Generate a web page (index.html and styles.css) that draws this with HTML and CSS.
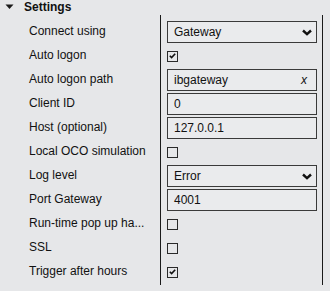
FILE: index.html
```html
<!DOCTYPE html>
<html lang="en">
<head>
    <meta charset="UTF-8">
    <meta name="viewport" content="width=device-width, initial-scale=1.0">
    <title>Settings</title>
    <link rel="stylesheet" href="styles.css">
</head>
<body>

<div class="section">
    <div class="section-head">
        <svg class="caret" width="9" height="6" viewBox="0 0 9 6"><polygon points="0.5,0.5 8.5,0.5 4.5,5" fill="#1a1a1a"/></svg>
        Settings
    </div>

    <div class="grid">
        <div class="names">
            <div class="name">Connect using</div>
            <div class="name">Auto logon</div>
            <div class="name">Auto logon path</div>
            <div class="name">Client ID</div>
            <div class="name">Host (optional)</div>
            <div class="name">Local OCO simulation</div>
            <div class="name">Log level</div>
            <div class="name">Port Gateway</div>
            <div class="name">Run-time pop up ha...</div>
            <div class="name">SSL</div>
            <div class="name">Trigger after hours</div>
        </div>

        <div class="values">
            <div class="value">
                <div class="box select">
                    <span>Gateway</span>
                    <svg class="chevron" width="10" height="7" viewBox="0 0 10 7"><polyline points="1,1.5 5,5.2 9,1.5" fill="none" stroke="#111" stroke-width="2.4"/></svg>
                </div>
            </div>
            <div class="value">
                <div class="check checked"><svg width="7" height="6" viewBox="0 0 7 6"><polyline points="0.8,2.8 2.6,4.6 6.2,0.8" fill="none" stroke="#111" stroke-width="1.6"/></svg></div>
            </div>
            <div class="value">
                <div class="box">
                    <span>ibgateway</span>
                    <span class="clear">x</span>
                </div>
            </div>
            <div class="value"><div class="box"><span>0</span></div></div>
            <div class="value"><div class="box"><span>127.0.0.1</span></div></div>
            <div class="value"><div class="check"></div></div>
            <div class="value">
                <div class="box select">
                    <span>Error</span>
                    <svg class="chevron" width="10" height="7" viewBox="0 0 10 7"><polyline points="1,1.5 5,5.2 9,1.5" fill="none" stroke="#111" stroke-width="2.4"/></svg>
                </div>
            </div>
            <div class="value"><div class="box"><span>4001</span></div></div>
            <div class="value"><div class="check"></div></div>
            <div class="value"><div class="check"></div></div>
            <div class="value">
                <div class="check checked"><svg width="7" height="6" viewBox="0 0 7 6"><polyline points="0.8,2.8 2.6,4.6 6.2,0.8" fill="none" stroke="#111" stroke-width="1.6"/></svg></div>
            </div>
        </div>
    </div>
</div>

</body>
</html>
```

FILE: styles.css
```css
body {
    margin: 0;
    background-color: #e6e7e9;
    font-family: "Liberation Sans", Arial, sans-serif;
    font-size: 12px;
    color: #111;
}
.section-head {
    display: flex;
    align-items: center;
    height: 13px;
    font-weight: bold;
    margin-bottom: 2px;
}
.caret {
    margin-left: 5px;
    margin-right: 10px;
}
.grid {
    display: flex;
}
.names {
    width: 160px;
    padding-top: 5px;
    padding-bottom: 1px;
}
.name {
    height: 24px;
    line-height: 23px;
    padding-left: 29px;
    padding-right: 6px;
    white-space: nowrap;
}
.values {
    width: 161px;
    border-left: 1px solid #1a1a1a;
    border-right: 1px solid #1a1a1a;
    padding-top: 5px;
    padding-bottom: 1px;
}
.value {
    height: 24px;
    display: flex;
    align-items: center;
    padding-left: 6px;
}
.box {
    width: 150px;
    height: 22px;
    box-sizing: border-box;
    border: 1px solid #3a3a3a;
    background-color: #eaebed;
    display: flex;
    align-items: center;
    justify-content: space-between;
    padding: 0 5px 0 6px;
}
.select {
    padding-right: 4px;
}
.chevron {
    display: block;
}
.clear {
    font-style: italic;
    padding-right: 4px;
}
.check {
    width: 11px;
    height: 11px;
    box-sizing: border-box;
    border: 1px solid #2a2a2a;
    display: flex;
    align-items: center;
    justify-content: center;
}
```
